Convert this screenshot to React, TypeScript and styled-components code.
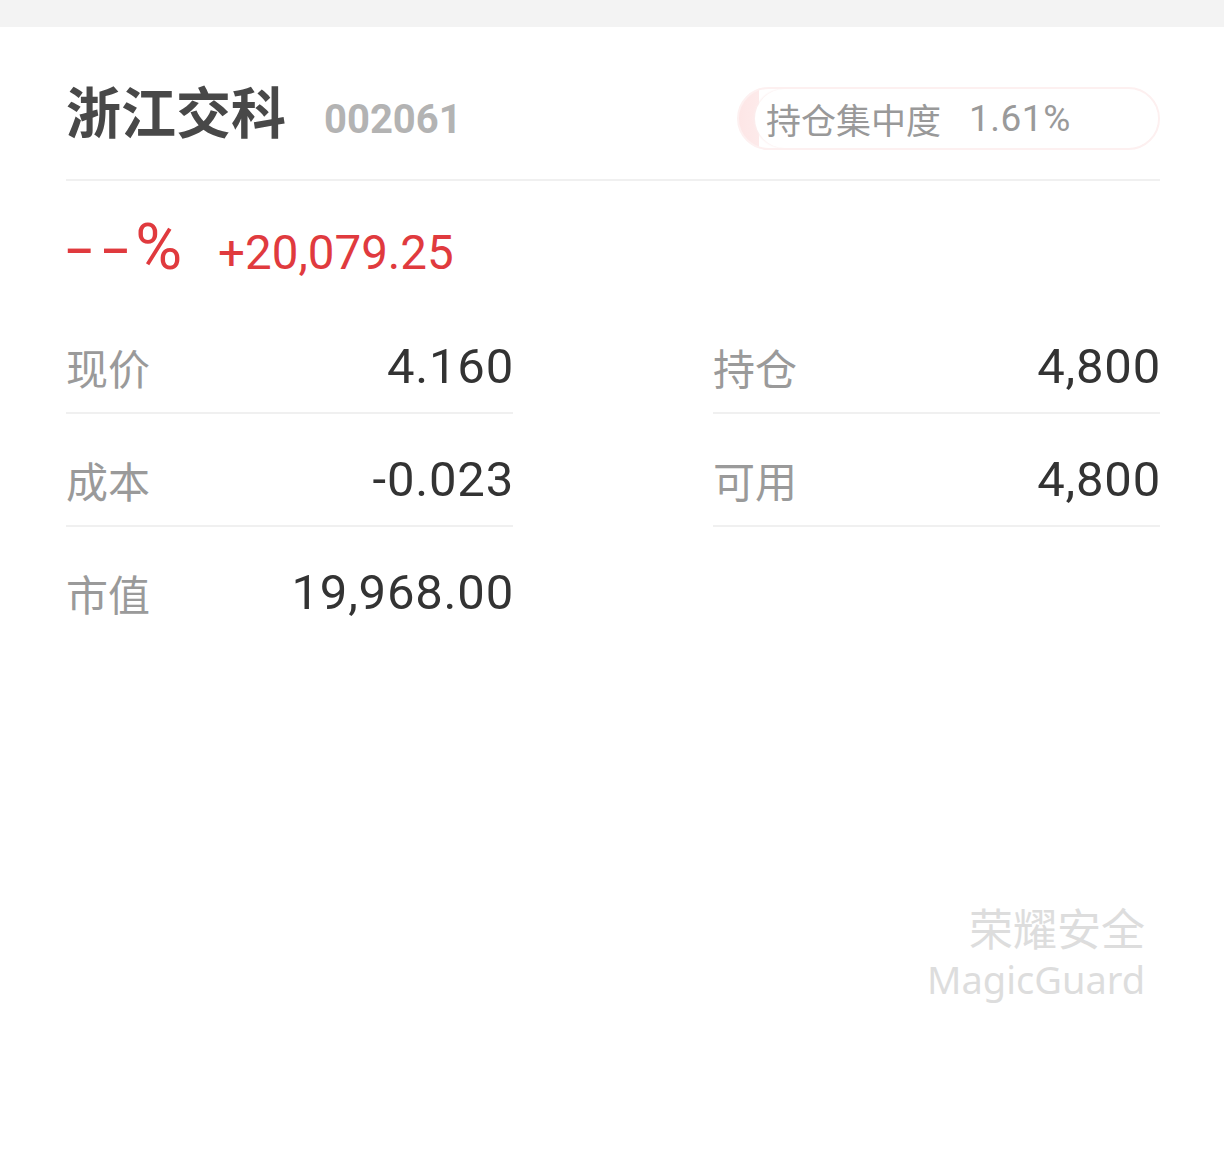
import React from 'react';
import {styled, createGlobalStyle} from "styled-components";

const GlobalStyle = createGlobalStyle`
  html, body {
    margin: 0;
    padding: 0;
    background: #ffffff;
  }
  body {
    font-family: "Noto Sans CJK SC", "Noto Sans", sans-serif;
  }
`;

const NUM_FONT = `Roboto, "Noto Sans", sans-serif`;

export const Page = styled.div`
  width: 1224px;
  min-height: 1163px;
  background: #ffffff;
`;

export const StatusStrip = styled.div`
  height: 27px;
  background: #f3f3f3;
`;

export const Card = styled.div`
  padding: 0 64px 0 66px;
`;

export const Header = styled.div`
  display: flex;
  align-items: flex-start;
  justify-content: space-between;
  padding: 60px 0 29px;
  border-bottom: 2px solid #f0f0f0;
`;

export const TitleGroup = styled.div`
  display: flex;
  align-items: baseline;
  gap: 38px;
`;

export const StockName = styled.span`
  font-family: "Noto Sans CJK SC", sans-serif;
  font-weight: 700;
  font-size: 55px;
  line-height: 45px;
  color: #484848;
`;

export const StockCode = styled.span`
  font-family: ${NUM_FONT};
  font-weight: 700;
  font-size: 40px;
  line-height: 45px;
  color: #b3b3b3;
`;

export const Badge = styled.div`
  display: flex;
  width: 423px;
  height: 63px;
  box-sizing: border-box;
  border: 2px solid #fdf0f0;
  border-radius: 32px;
  background: linear-gradient(to right, #fde6e6 0, #fdeaea 20px, #ffffff 20px);
  overflow: hidden;
`;

export const BadgeInner = styled.div`
  flex: 1;
  display: flex;
  align-items: center;
  gap: 28px;
  margin-left: 16px;
  padding-left: 11px;
  background: #ffffff;
  border-radius: 30px;
  box-shadow: -1px 0 2px #fbeeee;
  font-size: 35px;
  color: #999999;
`;

export const BadgeValue = styled.span`
  font-family: ${NUM_FONT};
  font-size: 37px;
  letter-spacing: 0.5px;
  color: #9a9a9a;
`;

export const ProfitRow = styled.div`
  display: flex;
  align-items: baseline;
  gap: 36px;
  padding: 37px 0 23px;
  height: 60px;
  color: #e03a3e;
  font-family: ${NUM_FONT};
`;

export const Ratio = styled.span`
  font-size: 64px;
  line-height: 60px;
`;

export const Dashes = styled.span`
  display: inline-block;
  font-size: 60px;
  letter-spacing: 6px;
  transform: scaleX(1.6);
  transform-origin: left center;
  margin-right: 24px;
`;

export const Amount = styled.span`
  font-size: 47.5px;
  line-height: 60px;
`;

export const Grid = styled.div`
  display: grid;
  grid-template-columns: 1fr 1fr;
  column-gap: 200px;
`;

export const Cell = styled.div<{ $divider?: boolean }>`
  display: flex;
  align-items: center;
  justify-content: space-between;
  height: 50px;
  padding: 40px 0 21px;
  border-bottom: 2px solid ${p => (p.$divider ? '#f0f0f0' : 'transparent')};
`;

export const Label = styled.span`
  font-family: "Noto Sans CJK SC", sans-serif;
  font-size: 42px;
  color: #9a9a9a;
`;

export const Value = styled.span`
  font-family: ${NUM_FONT};
  font-size: 49px;
  letter-spacing: 0.8px;
  margin-right: -1px;
  color: #333333;
`;

export const Watermark = styled.div`
  margin-top: 262px;
  padding-right: 15px;
  display: flex;
  flex-direction: column;
  align-items: flex-end;
  color: #dddddd;
`;

export const WatermarkCn = styled.span`
  font-family: "Noto Sans CJK SC", sans-serif;
  font-size: 44px;
  line-height: 50px;
`;

export const WatermarkEn = styled.span`
  font-family: "Noto Sans", sans-serif;
  font-size: 38px;
  line-height: 54px;
`;

const rows: { label: string; value: string; divider: boolean }[] = [
    {label: '现价', value: '4.160', divider: true},
    {label: '持仓', value: '4,800', divider: true},
    {label: '成本', value: '-0.023', divider: true},
    {label: '可用', value: '4,800', divider: true},
    {label: '市值', value: '19,968.00', divider: false},
];

const App: React.FC = () => {
    return (
        <Page>
            <GlobalStyle/>
            <StatusStrip/>
            <Card>
                <Header>
                    <TitleGroup>
                        <StockName>浙江交科</StockName>
                        <StockCode>002061</StockCode>
                    </TitleGroup>
                    <Badge>
                        <BadgeInner>
                            <span>持仓集中度</span>
                            <BadgeValue>1.61%</BadgeValue>
                        </BadgeInner>
                    </Badge>
                </Header>
                <ProfitRow>
                    <Ratio><Dashes>--</Dashes>%</Ratio>
                    <Amount>+20,079.25</Amount>
                </ProfitRow>
                <Grid>
                    {rows.map(r => (
                        <Cell key={r.label} $divider={r.divider}>
                            <Label>{r.label}</Label>
                            <Value>{r.value}</Value>
                        </Cell>
                    ))}
                </Grid>
                <Watermark>
                    <WatermarkCn>荣耀安全</WatermarkCn>
                    <WatermarkEn>MagicGuard</WatermarkEn>
                </Watermark>
            </Card>
        </Page>
    );
};

export default App;
